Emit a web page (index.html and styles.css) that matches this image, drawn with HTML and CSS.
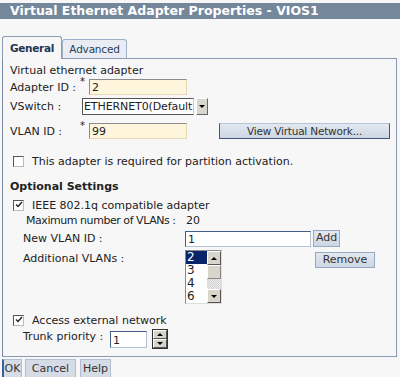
FILE: index.html
```html
<!DOCTYPE html>
<html lang="en">
<head>
    <meta charset="UTF-8">
    <title>Virtual Ethernet Adapter Properties - VIOS1</title>
    <link rel="stylesheet" href="styles.css">
</head>
<body>

    <div class="titlebar">Virtual Ethernet Adapter Properties - VIOS1</div>

    <div class="tabs">
        <div class="tab active">General</div>
        <div class="tab other">Advanced</div>
    </div>

    <div class="panel">
        <div class="row head">Virtual ethernet adapter</div>

        <div class="row r-adapter">
            <span class="label">Adapter ID :</span>
            <span class="req">*</span>
            <span class="field yellow">2</span>
        </div>

        <div class="row r-vswitch">
            <span class="label short">VSwitch :</span>
            <span class="select">
                <span class="select-text">ETHERNET0(Default</span>
                <span class="select-btn"><span class="tri-down"></span></span>
            </span>
        </div>

        <div class="row r-vlan">
            <span class="label">VLAN ID :</span>
            <span class="req">*</span>
            <span class="field yellow">99</span>
            <span class="btn btn-wide">View Virtual Network...</span>
        </div>

        <div class="row check-row r-required">
            <span class="check"></span>
            <span>This adapter is required for partition activation.</span>
        </div>

        <div class="row section">Optional Settings</div>

        <div class="row check-row r-ieee">
            <span class="check"><svg width="8" height="8" viewBox="0 0 8 8"><path d="M1 3.5 L3 5.5 L7 1" fill="none" stroke="#222" stroke-width="1.4"/></svg></span>
            <span>IEEE 802.1q compatible adapter</span>
        </div>

        <div class="row r-max">
            <span class="label-max">Maximum number of VLANs :</span>
            <span>20</span>
        </div>

        <div class="row r-new">
            <span class="label-wide">New VLAN ID :</span>
            <span class="field white vlan">1</span>
            <span class="btn btn-add">Add</span>
        </div>

        <div class="row r-list">
            <span class="label-wide">Additional VLANs :</span>
            <div class="listbox">
                <div class="items">
                    <div class="item sel">2</div>
                    <div class="item">3</div>
                    <div class="item">4</div>
                    <div class="item">6</div>
                </div>
                <div class="scroll">
                    <span class="sbtn"><span class="tri-up"></span></span>
                    <span class="thumb"></span>
                    <span class="track"></span>
                    <span class="sbtn"><span class="tri-down"></span></span>
                </div>
            </div>
            <span class="btn btn-remove">Remove</span>
        </div>

        <div class="row check-row r-access">
            <span class="check"><svg width="8" height="8" viewBox="0 0 8 8"><path d="M1 3.5 L3 5.5 L7 1" fill="none" stroke="#222" stroke-width="1.4"/></svg></span>
            <span>Access external network</span>
        </div>

        <div class="row r-trunk">
            <span class="label-trunk">Trunk priority :</span>
            <span class="field white small">1</span>
            <span class="spinner">
                <span class="sbtn"><span class="tri-up"></span></span>
                <span class="sbtn"><span class="tri-down"></span></span>
            </span>
        </div>
    </div>

    <div class="actions">
        <span class="btn focus">OK</span>
        <span class="btn cancel">Cancel</span>
        <span class="btn help">Help</span>
    </div>

</body>
</html>
```

FILE: styles.css
```css
body {
    margin: 0;
    background: #f7f7f7;
    font-family: "DejaVu Sans", Verdana, sans-serif;
    font-size: 11px;
    color: #222;
}

.titlebar {
    margin-top: 3px;
    height: 16px;
    line-height: 16px;
    background: #75879b;
    color: #fff;
    font-weight: bold;
    font-size: 12.5px;
    padding-left: 10px;
}

/* tabs */

.tabs {
    display: flex;
    align-items: flex-end;
    margin: 17px 0 0 2px;
    height: 22px;
}

.tab {
    height: 19px;
    line-height: 19px;
    border: 1px solid #9fb0c8;
    border-bottom: none;
    border-radius: 3px 3px 0 0;
    background: #e9edf3;
    color: #2b3d55;
    font-size: 10.5px;
    text-align: center;
    box-sizing: border-box;
}

.tab.other {
    width: 65px;
    letter-spacing: -0.2px;
}

.tab.active {
    width: 60px;
    height: 23px;
    line-height: 22px;
    background: #f7f7f7;
    border-color: #8b9bb4;
    font-weight: bold;
    color: #1e3554;
    letter-spacing: -0.3px;
    position: relative;
    top: 1px;
}

/* panel */

.panel {
    margin-left: 2px;
    width: 393px;
    height: 293px;
    padding-top: 4px;
    border: 1px solid #8b9bb4;
    border-left-color: #7a8aa5;
}

.row {
    display: flex;
    align-items: center;
    padding-left: 7px;
    height: 14px;
    white-space: nowrap;
}

.row > * {
    flex-shrink: 0;
}

.r-adapter { margin-top: 2px; height: 16px; }
.r-vswitch { margin-top: 3px; height: 17px; }
.r-vlan { margin-top: 8px; height: 16px; padding-right: 6px; }
.r-required { margin-top: 15px; }
.section { margin-top: 11px; font-weight: bold; }
.r-ieee { margin-top: 5px; }
.r-max { margin-top: 1px; padding-left: 23px; }
.r-new { margin-top: 3px; height: 17px; padding-left: 20px; }
.r-list { margin-top: 3px; height: 54px; padding-left: 20px; align-items: flex-start; }
.r-access { margin-top: 9px; }
.r-trunk { margin-top: 2px; height: 20px; padding-left: 20px; }

.label {
    width: 70px;
}

.label.short {
    width: 72px;
}

.req {
    width: 9px;
    align-self: flex-start;
    font-size: 10px;
    line-height: 8px;
    margin-top: -1px;
}

.field {
    height: 14px;
    line-height: 15px;
    border: 1px solid #b8b8b8;
    border-top-color: #7a7a7a;
    border-left-color: #7a7a7a;
    padding-left: 2px;
}

.field.yellow {
    width: 94px;
    background: #fdf6dd;
    border-color: #e4d9b6;
    border-top-color: #8c8c8c;
    border-left-color: #8c8c8c;
}

.field.white {
    background: #fff;
}

.field.vlan {
    width: 122px;
    border-color: #3f5f8a;
    border-right-color: #b5c2d4;
    border-bottom-color: #b5c2d4;
}

.field.small {
    width: 33px;
    height: 15px;
    line-height: 17px;
    border-color: #3f5f8a;
    border-right-color: #b5c2d4;
    border-bottom-color: #b5c2d4;
}

/* select */

.select {
    display: flex;
    height: 17px;
}

.select-text {
    width: 109px;
    padding-left: 1px;
    line-height: 16px;
    background: #fff;
    border: 1px solid #555;
    border-right: 1px solid #ccc;
    letter-spacing: -0.1px;
}

.select-btn {
    width: 10px;
    height: 15px;
    margin-left: 2px;
    background: #d9d6ce;
    border: 1px solid #fff;
    border-right-color: #666;
    border-bottom-color: #666;
    display: flex;
    align-items: center;
    justify-content: center;
}

.tri-down {
    width: 0;
    height: 0;
    border-left: 3px solid transparent;
    border-right: 3px solid transparent;
    border-top: 3px solid #000;
}

.tri-up {
    width: 0;
    height: 0;
    border-left: 3px solid transparent;
    border-right: 3px solid transparent;
    border-bottom: 3px solid #000;
}

/* buttons */

.btn {
    display: inline-block;
    height: 14px;
    line-height: 14px;
    padding: 0 4px;
    background: linear-gradient(#e3e8f0, #cdd6e4);
    border: 1px solid #97a8c2;
    color: #333;
    text-align: center;
}

.btn-wide {
    flex: 1 0 auto;
    height: 14px;
    margin-left: 32px;
    font-size: 10.5px;
    letter-spacing: -0.2px;
    border-color: #44577a;
    border-top-color: #b6c3d6;
}

.btn-add {
    margin-left: 2px;
    padding: 0 2px;
    height: 15px;
}

.btn-remove {
    margin-left: 93px;
    margin-top: 2px;
    width: 50px;
}

/* checkboxes */

.check-row {
    padding-left: 10px;
}

.check {
    width: 9px;
    height: 9px;
    border: 1px solid #555;
    border-right-color: #bbb;
    border-bottom-color: #bbb;
    background: #fff;
    margin-right: 8px;
    display: flex;
    align-items: center;
    justify-content: center;
}

.label-max {
    width: 160px;
    letter-spacing: -0.45px;
}

.label-wide {
    width: 162px;
}

.r-list .label-wide {
    margin-top: 2px;
}

/* list box */

.listbox {
    display: flex;
    width: 35px;
    height: 52px;
    border: 1px solid #888;
    border-right-color: #ddd;
    border-bottom-color: #ddd;
    background: #fff;
}

.items {
    width: 21px;
    line-height: 13px;
    font-size: 12px;
}

.item {
    padding-left: 1px;
}

.item.sel {
    background: #0a246a;
    color: #fff;
}

.scroll {
    display: flex;
    flex-direction: column;
    width: 14px;
}

.sbtn {
    width: 12px;
    height: 12px;
    background: #d8d5cd;
    border: 1px solid #fff;
    border-right-color: #555;
    border-bottom-color: #555;
    display: flex;
    align-items: center;
    justify-content: center;
}

.thumb {
    width: 12px;
    height: 12px;
    background: #d8d5cd;
    border: 1px solid #fff;
    border-right-color: #888;
    border-bottom-color: #888;
}

.track {
    flex: 1;
    background-image: repeating-conic-gradient(#eeeeee 0 25%, #d0d0d0 0 50%);
    background-size: 2px 2px;
}

/* trunk */

.r-trunk .label-trunk {
    width: 87px;
    align-self: flex-start;
    margin-top: 1px;
}

.spinner {
    display: flex;
    flex-direction: column;
    margin-left: 5px;
    border: 1px solid #333;
}

.spinner .sbtn {
    height: 7px;
}

/* bottom buttons */

.actions {
    display: flex;
    margin: 2px 0 0 2px;
}

.actions .btn {
    height: 17px;
    line-height: 17px;
    padding: 0;
    background: #d6dce6;
    border-color: #b2bfd2;
    box-sizing: content-box;
}

.actions .btn.focus {
    width: 17px;
    border-left: 2px solid #3a5fa0;
}

.actions .btn.cancel {
    width: 49px;
    margin-left: 3px;
}

.actions .btn.help {
    width: 29px;
    margin-left: 4px;
}
```
